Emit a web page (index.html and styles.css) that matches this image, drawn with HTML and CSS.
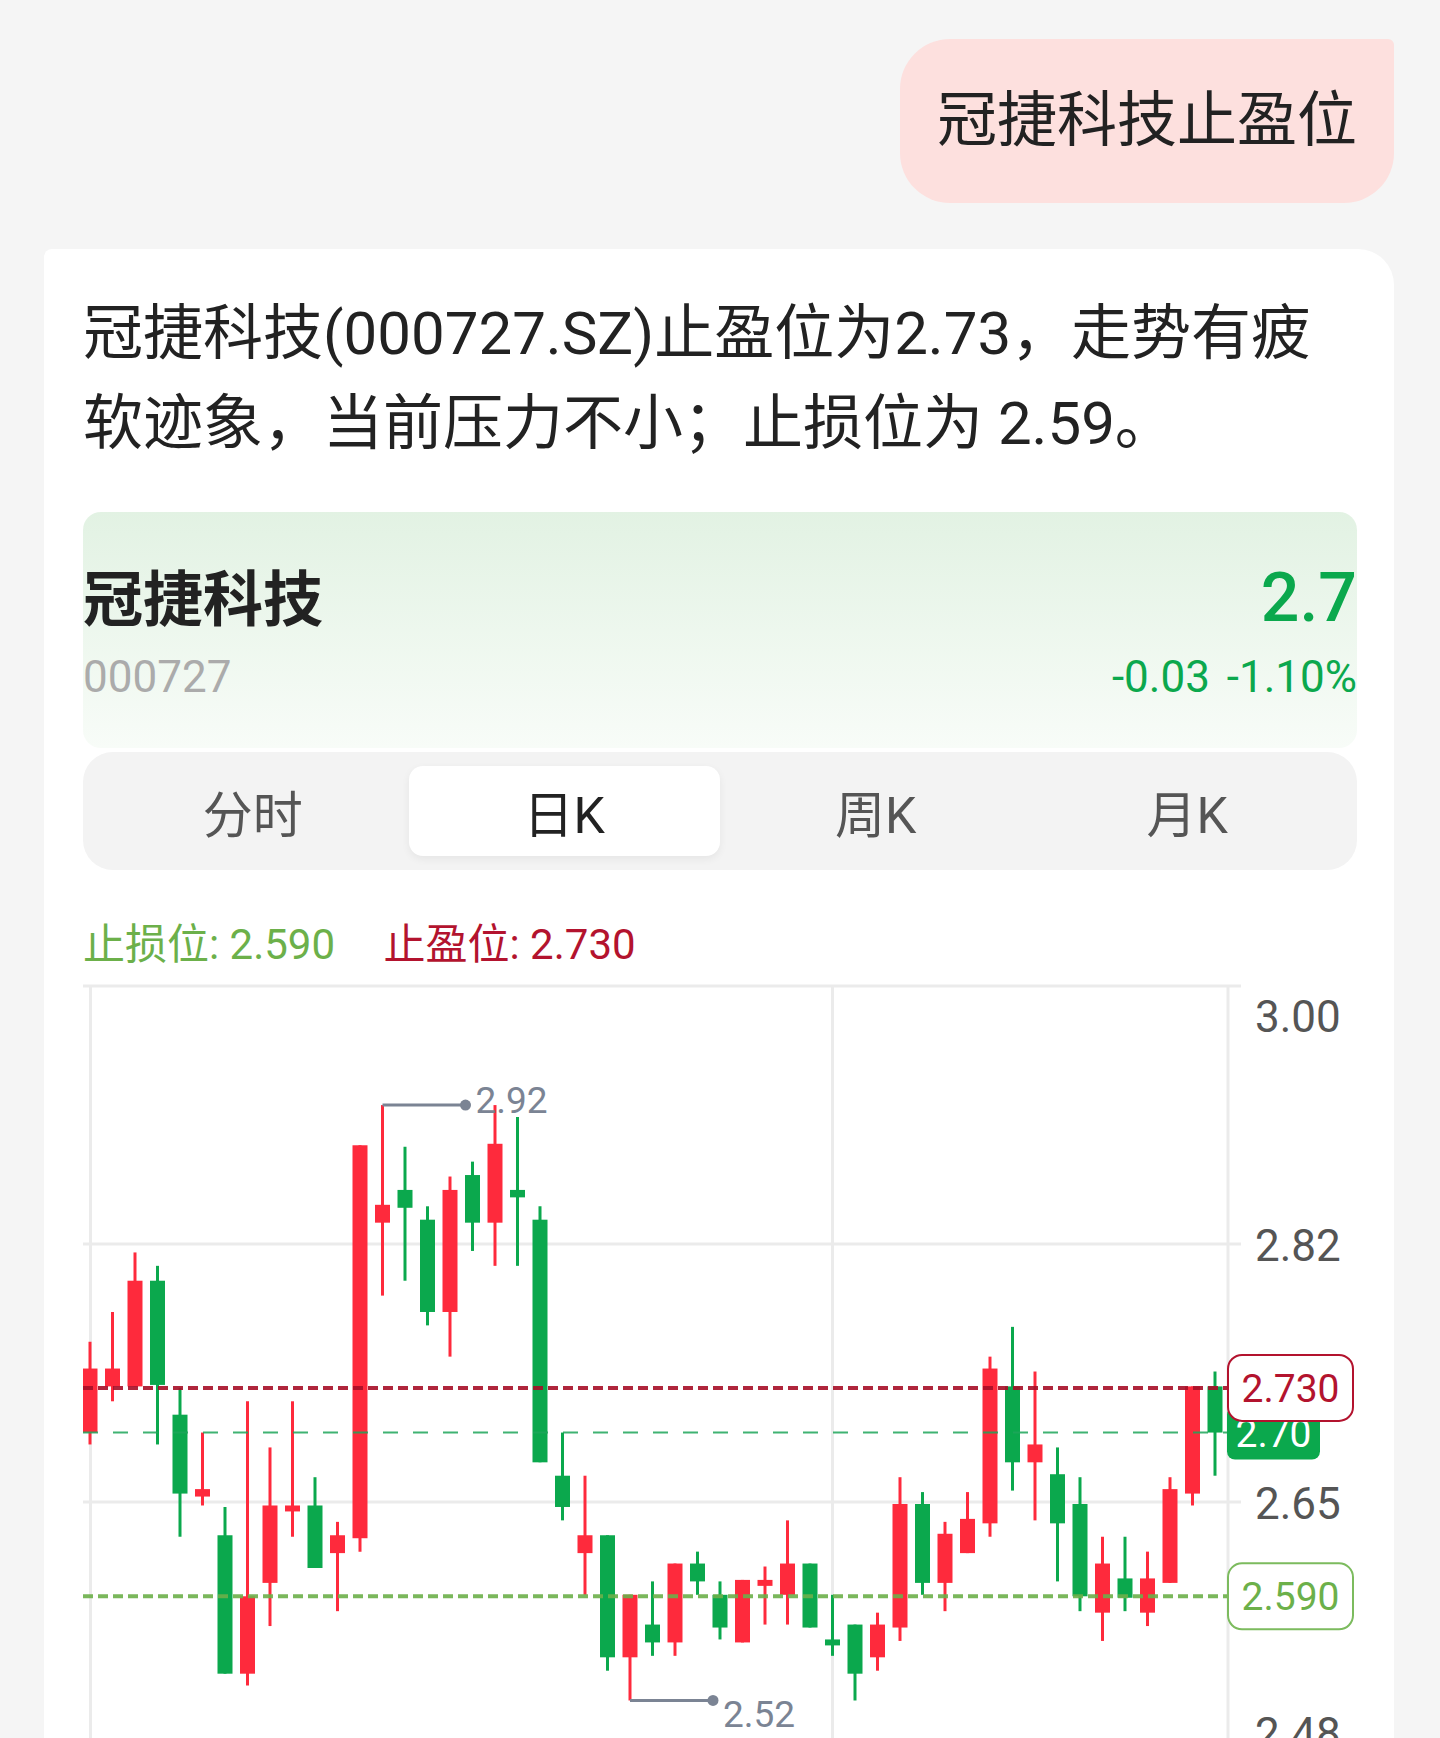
FILE: index.html
```html
<!DOCTYPE html>
<html lang="zh-CN">
<head>
    <meta charset="UTF-8">
    <meta name="viewport" content="width=device-width, initial-scale=1.0">
    <title>冠捷科技止盈位</title>
    <link rel="stylesheet" href="styles.css">
</head>
<body>
    <div class="chat">
        <div class="user-row">
            <div class="bubble">冠捷科技止盈位</div>
        </div>

        <div class="card">
            <p class="answer">冠捷科技(000727.SZ)止盈位为2.73，走势有疲软迹象，当前压力不小；止损位为 2.59。</p>

            <div class="quote">
                <div class="quote-row">
                    <span class="stock-name">冠捷科技</span>
                    <span class="price">2.7</span>
                </div>
                <div class="quote-row second">
                    <span class="code">000727</span>
                    <span class="change">-0.03 -1.10%</span>
                </div>
            </div>

            <div class="tabs">
                <div class="tab">分时</div>
                <div class="tab active">日K</div>
                <div class="tab">周K</div>
                <div class="tab">月K</div>
            </div>

            <div class="levels">
                <span class="stop-loss">止损位: 2.590</span>
                <span class="take-profit">止盈位: 2.730</span>
            </div>

            <div class="chart">
                <svg id="kline" width="1274" height="800" viewBox="0 0 1274 800"></svg>
            </div>
        </div>
    </div>

    <script>
        // daily candles: [open, close, high, low]
        const candles = [
            [2.700, 2.743, 2.761, 2.692], [2.731, 2.743, 2.781, 2.721], [2.731, 2.802, 2.821, 2.731],
            [2.802, 2.732, 2.812, 2.692], [2.712, 2.659, 2.730, 2.630], [2.657, 2.662, 2.700, 2.651],
            [2.631, 2.538, 2.650, 2.538], [2.538, 2.590, 2.721, 2.530], [2.599, 2.651, 2.690, 2.570],
            [2.647, 2.651, 2.721, 2.630], [2.651, 2.609, 2.670, 2.609], [2.619, 2.631, 2.640, 2.580],
            [2.629, 2.893, 2.893, 2.620], [2.841, 2.853, 2.920, 2.792], [2.863, 2.851, 2.892, 2.802],
            [2.843, 2.781, 2.852, 2.772], [2.781, 2.863, 2.872, 2.751], [2.873, 2.841, 2.882, 2.822],
            [2.841, 2.894, 2.920, 2.812], [2.863, 2.858, 2.912, 2.812], [2.843, 2.680, 2.852, 2.680],
            [2.671, 2.650, 2.700, 2.641], [2.619, 2.631, 2.671, 2.591], [2.631, 2.549, 2.631, 2.540],
            [2.549, 2.591, 2.591, 2.520], [2.571, 2.559, 2.600, 2.550], [2.559, 2.612, 2.612, 2.550],
            [2.612, 2.600, 2.620, 2.591], [2.591, 2.569, 2.600, 2.561], [2.559, 2.601, 2.601, 2.559],
            [2.597, 2.601, 2.610, 2.571], [2.591, 2.612, 2.641, 2.571], [2.612, 2.569, 2.612, 2.569],
            [2.561, 2.557, 2.591, 2.550], [2.571, 2.538, 2.571, 2.520], [2.549, 2.571, 2.579, 2.540],
            [2.569, 2.652, 2.670, 2.560], [2.652, 2.599, 2.660, 2.591], [2.599, 2.632, 2.640, 2.580],
            [2.619, 2.642, 2.660, 2.619], [2.639, 2.743, 2.751, 2.630], [2.731, 2.680, 2.771, 2.661],
            [2.680, 2.692, 2.741, 2.641], [2.672, 2.639, 2.690, 2.600], [2.652, 2.590, 2.670, 2.580],
            [2.579, 2.612, 2.630, 2.560], [2.602, 2.589, 2.630, 2.580], [2.579, 2.602, 2.620, 2.570],
            [2.599, 2.662, 2.670, 2.599], [2.659, 2.731, 2.731, 2.651], [2.731, 2.700, 2.741, 2.671]
        ];

        function drawChart() {
            const UP = '#fe2a3c';
            const DOWN = '#0ba84d';
            const svg = document.getElementById('kline');
            const chartTop = 6;
            const step = 258;
            const axisX = 1145;
            const maxP = 3.00;
            const pxPerUnit = 1488.5;

            const y = p => chartTop + (maxP - p) * pxPerUnit;
            const x = i => 7 + 22.5 * i;

            function add(tag, attrs, text) {
                const el = document.createElementNS('http://www.w3.org/2000/svg', tag);
                for (const k in attrs) el.setAttribute(k, attrs[k]);
                if (text) el.textContent = text;
                svg.appendChild(el);
                return el;
            }

            // grid
            ['3.00', '2.82', '2.65', '2.48'].forEach((label, i) => {
                const gy = chartTop + step * i;
                add('line', { x1: 0, y1: gy, x2: 1158, y2: gy, class: 'grid' });
                const ty = i === 0 ? gy + 46 : (i === 3 ? gy - 11 : gy + 17);
                add('text', { x: 1172, y: ty, class: 'axis' }, label);
            });
            [7.5, 749.5, axisX].forEach(gx => {
                add('line', { x1: gx, y1: chartTop, x2: gx, y2: 800, class: 'grid' });
            });

            // candles
            candles.forEach(([o, c, h, l], i) => {
                const color = c >= o ? UP : DOWN;
                const cx = x(i);
                add('line', { x1: cx, y1: y(h), x2: cx, y2: y(l), stroke: color, 'stroke-width': 3 });
                const bodyTop = y(Math.max(o, c));
                const bodyH = Math.max(Math.abs(o - c) * pxPerUnit, 3);
                add('rect', { x: cx - 7.5, y: bodyTop, width: 15, height: bodyH, fill: color });
            });

            // reference lines
            add('line', { x1: 0, y1: y(2.70), x2: axisX, y2: y(2.70), class: 'ref-last' });
            add('line', { x1: 0, y1: y(2.73), x2: axisX, y2: y(2.73), class: 'ref-profit' });
            add('line', { x1: 0, y1: y(2.59), x2: axisX, y2: y(2.59), class: 'ref-loss' });

            // high / low markers
            function marker(i, p, label, textY) {
                const my = y(p);
                add('line', { x1: x(i), y1: my, x2: x(i) + 83, y2: my, class: 'mark' });
                add('circle', { cx: x(i) + 83, cy: my, r: 5.5, class: 'mark-dot' });
                add('text', { x: x(i) + 93, y: textY, class: 'mark-text' }, label);
            }
            marker(13, 2.92, '2.92', y(2.92) + 8);
            marker(24, 2.52, '2.52', y(2.52) + 27);

            // price tags on the axis
            add('rect', { x: 1144, y: y(2.70) - 26, width: 93, height: 53, rx: 8, fill: DOWN });
            add('text', { x: 1190.5, y: y(2.70) + 14, class: 'tag', fill: '#fff' }, '2.70');

            add('rect', { x: 1145, y: y(2.73) - 33, width: 125, height: 66, rx: 14, class: 'tag-profit' });
            add('text', { x: 1207.5, y: y(2.73) + 14, class: 'tag', fill: '#b3132e' }, '2.730');

            add('rect', { x: 1145, y: y(2.59) - 33, width: 125, height: 66, rx: 14, class: 'tag-loss' });
            add('text', { x: 1207.5, y: y(2.59) + 14, class: 'tag', fill: '#6cb04a' }, '2.590');
        }

        document.addEventListener('DOMContentLoaded', drawChart);
    </script>
</body>
</html>
```

FILE: styles.css
```css
body {
    margin: 0;
    background-color: #f5f5f5;
    font-family: Roboto, "Noto Sans CJK SC", sans-serif;
    color: #222222;
}
.chat {
    padding: 39px 46px 0 44px;
}
.user-row {
    display: flex;
    justify-content: flex-end;
}
.bubble {
    background-color: #fde0de;
    border-radius: 50px 6px 50px 50px;
    padding: 40px 37px;
    font-size: 60px;
    line-height: 84px;
}
.card {
    margin-top: 46px;
    background-color: #ffffff;
    border-radius: 8px 36px 0 0;
    padding: 40px 37px 40px 39px;
}
.answer {
    margin: 0;
    font-size: 60px;
    line-height: 90px;
}
.quote {
    box-sizing: border-box;
    height: 236px;
    margin-top: 43px;
    padding-top: 46px;
    border-radius: 18px;
    background: linear-gradient(180deg, #e2f2e3 0%, #f8fcf8 100%);
}
.quote-row {
    display: flex;
    justify-content: space-between;
    align-items: baseline;
}
.quote-row.second {
    margin-top: 8px;
}
.stock-name {
    font-size: 60px;
    line-height: 80px;
    font-weight: 700;
}
.price {
    font-size: 68px;
    line-height: 80px;
    font-weight: 500;
    color: #0ba84d;
}
.code {
    font-size: 44px;
    line-height: 56px;
    color: #ababab;
}
.change {
    font-size: 44px;
    line-height: 56px;
    word-spacing: 6px;
    color: #0ba84d;
}
.tabs {
    display: flex;
    margin-top: 4px;
    padding: 14px;
    border-radius: 30px;
    background-color: #f3f3f3;
}
.tab {
    flex: 1;
    height: 90px;
    display: flex;
    align-items: center;
    justify-content: center;
    border-radius: 14px;
    font-size: 50px;
    color: #555555;
}
.tab.active {
    background-color: #ffffff;
    color: #222222;
    box-shadow: 0 3px 8px rgba(0, 0, 0, 0.06);
}
.levels {
    margin-top: 50px;
    font-size: 42px;
    line-height: 50px;
}
.stop-loss {
    color: #6cb04a;
}
.take-profit {
    margin-left: 38px;
    color: #b3132e;
}
.chart {
    margin-top: 10px;
}
.chart svg {
    display: block;
}
.chart text {
    font-family: Roboto, sans-serif;
}
.grid {
    stroke: #ebebeb;
    stroke-width: 3;
}
.axis {
    font-size: 44px;
    fill: #555555;
}
.ref-last {
    stroke: #1ea65a;
    stroke-width: 2;
    stroke-dasharray: 15 15;
    opacity: 0.85;
}
.ref-profit {
    stroke: #a70f28;
    stroke-width: 4;
    stroke-dasharray: 10 5;
    opacity: 0.9;
}
.ref-loss {
    stroke: #6cb04a;
    stroke-width: 4;
    stroke-dasharray: 10 5;
    opacity: 0.9;
}
.mark {
    stroke: #7b8494;
    stroke-width: 3;
}
.mark-dot {
    fill: #7b8494;
}
.mark-text {
    font-size: 37px;
    fill: #7b8494;
}
.tag {
    font-size: 39px;
    text-anchor: middle;
}
.tag-profit {
    fill: #ffffff;
    stroke: #b3132e;
    stroke-width: 2;
}
.tag-loss {
    fill: #ffffff;
    stroke: #7cbb5e;
    stroke-width: 2;
}
```
